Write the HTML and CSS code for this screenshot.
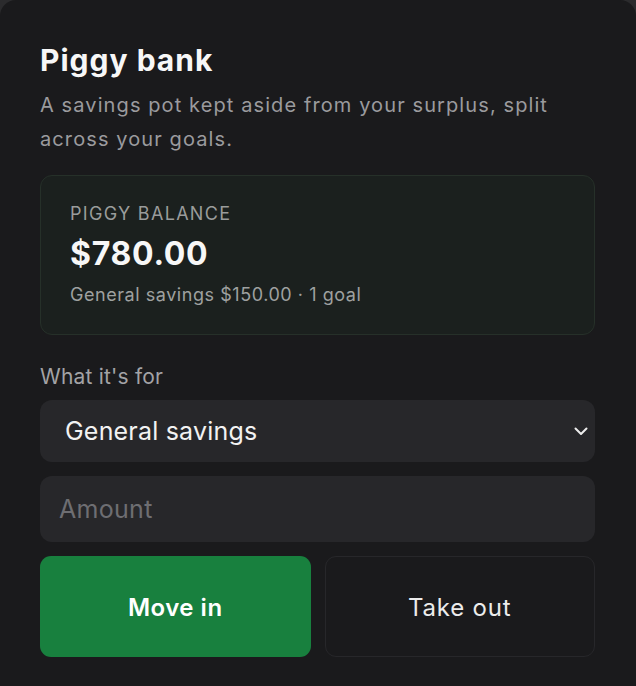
FILE: index.html
```html
<!DOCTYPE html>
<html lang="en">
<head>
<meta charset="utf-8">
<title>Piggy bank</title>
<link rel="stylesheet" href="styles.css">
</head>
<body>
<section class="card">
  <h1 class="title">Piggy bank</h1>
  <p class="desc">A savings pot kept aside from your surplus, split across your goals.</p>
  <div class="balance">
    <div class="balance-label">PIGGY BALANCE</div>
    <div class="balance-amount">$780.00</div>
    <div class="balance-sub">General savings $150.00 · 1 goal</div>
  </div>
  <label class="field-label" for="goal">What it's for</label>
  <div class="select" id="goal">
    <span class="select-value">General savings</span>
    <svg class="chevron" width="14" height="14" viewBox="0 0 14 14" aria-hidden="true"><path d="M1.5 4.5 L7 10 L12.5 4.5" fill="none" stroke="#ececec" stroke-width="2" stroke-linecap="round" stroke-linejoin="round"/></svg>
  </div>
  <div class="input"><span class="placeholder">Amount</span></div>
  <div class="actions">
    <button class="btn btn-primary">Move in</button>
    <button class="btn btn-secondary">Take out</button>
  </div>
</section>
</body>
</html>
```
FILE: styles.css
```css
html, body {
  margin: 0;
  padding: 0;
  background: #2b2b2d;
  height: 686px;
  overflow: hidden;
}
body {
  font-family: Inter, "Noto Sans", sans-serif;
  color: #f2f2f2;
}
.card {
  background: #1a1a1c;
  border-radius: 16px;
  height: 720px;
  padding: 40px 41px 0 40px;
  box-sizing: border-box;
  display: flex;
  flex-direction: column;
}
.title {
  margin: 0;
  font-size: 30px;
  font-weight: 700;
  line-height: 40px;
  color: #f7f7f7;
  letter-spacing: 1px;
}
.desc {
  margin: 8px 0 0;
  font-size: 20px;
  line-height: 34px;
  letter-spacing: 1.1px;
  color: #9b9b9e;
}
.balance {
  margin-top: 19px;
  background: #1b201e;
  border: 1px solid #263029;
  border-radius: 12px;
  padding: 26px 29px 26px;
  display: flex;
  flex-direction: column;
}
.balance-label {
  font-size: 18px;
  line-height: 24px;
  letter-spacing: 1.3px;
  color: #9a9c9b;
}
.balance-amount {
  margin-top: 7px;
  font-size: 32px;
  font-weight: 700;
  line-height: 42px;
  letter-spacing: 0.7px;
  color: #f7f7f7;
}
.balance-sub {
  margin-top: 7px;
  font-size: 18px;
  line-height: 26px;
  letter-spacing: 0.55px;
  color: #9fa1a0;
}
.field-label {
  margin-top: 28px;
  font-size: 21px;
  line-height: 28px;
  letter-spacing: 0.2px;
  color: #a3a3a6;
}
.select {
  margin-top: 9px;
  height: 62px;
  background: #27272a;
  border-radius: 12px;
  display: flex;
  align-items: center;
  justify-content: space-between;
  padding: 0 7px 0 25px;
}
.select-value {
  font-size: 25px;
  letter-spacing: 0.2px;
  color: #f2f2f2;
}
.input {
  margin-top: 14px;
  height: 66px;
  background: #27272a;
  border-radius: 12px;
  display: flex;
  align-items: center;
  padding: 0 19px;
}
.placeholder {
  font-size: 25px;
  letter-spacing: 0.3px;
  color: #6e6e72;
}
.actions {
  margin-top: 14px;
  display: grid;
  grid-template-columns: 1fr 1fr;
  gap: 14px;
}
.btn {
  height: 101px;
  padding-top: 3px;
  border-radius: 11px;
  font-family: Inter, "Noto Sans", sans-serif;
  font-size: 24px;
  cursor: pointer;
}
.btn-primary {
  background: #18803e;
  border: none;
  color: #ffffff;
  font-weight: 600;
  letter-spacing: 0.5px;
}
.btn-secondary {
  background: #1a1a1c;
  border: 1px solid #27272a;
  color: #ececec;
  font-weight: 400;
  letter-spacing: 0.8px;
}
```
